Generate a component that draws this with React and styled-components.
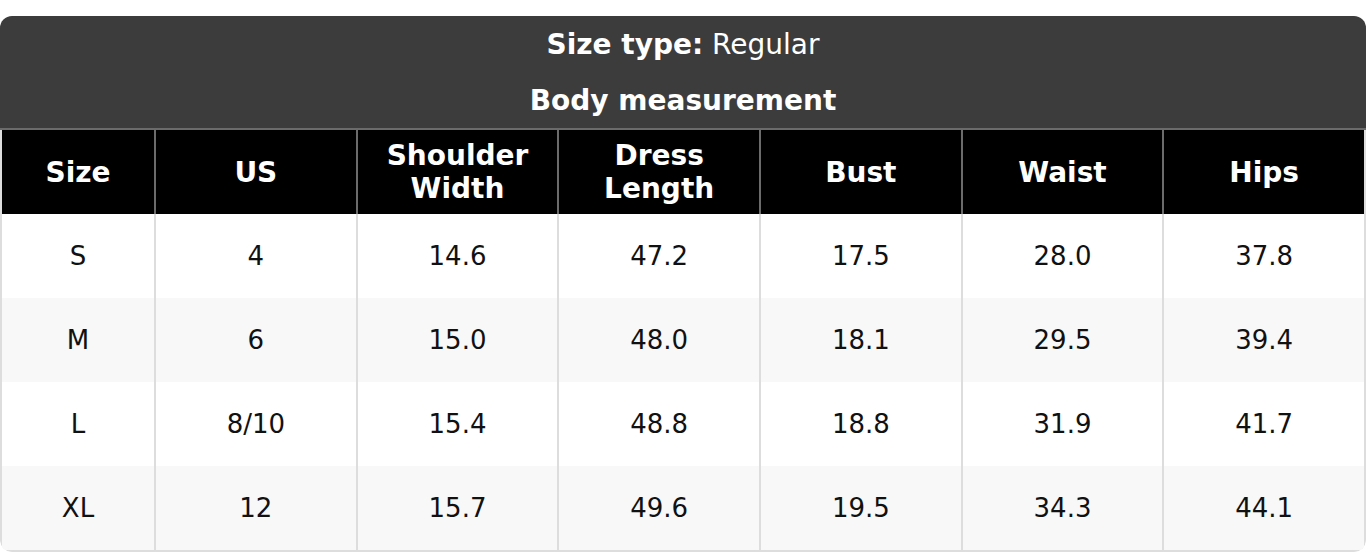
import React from 'react'
import styled, { createGlobalStyle } from 'styled-components'

const columns = ['Size', 'US', 'Shoulder Width', 'Dress Length', 'Bust', 'Waist', 'Hips']

const rows = [
  ['S', '4', '14.6', '47.2', '17.5', '28.0', '37.8'],
  ['M', '6', '15.0', '48.0', '18.1', '29.5', '39.4'],
  ['L', '8/10', '15.4', '48.8', '18.8', '31.9', '41.7'],
  ['XL', '12', '15.7', '49.6', '19.5', '34.3', '44.1'],
]

export default function App() {
  return (
    <>
      <GlobalStyle />
      <Page>
        <Chart>
          <Caption>
            <CaptionLine>
              <span>
                <b>Size type:</b> Regular
              </span>
            </CaptionLine>
            <CaptionLine>
              <b>Body measurement</b>
            </CaptionLine>
          </Caption>
          <Grid>
            {columns.map((c, i) => (
              <HeadCell key={c} first={i === 0}>
                {c.split(' ').map((w) => (
                  <span key={w}>{w}</span>
                ))}
              </HeadCell>
            ))}
            {rows.map((r, ri) =>
              r.map((v, ci) => (
                <Cell key={ri + '-' + ci} first={ci === 0} striped={ri % 2 === 1}>
                  {v}
                </Cell>
              ))
            )}
          </Grid>
        </Chart>
      </Page>
    </>
  )
}

const GlobalStyle = createGlobalStyle`
  body {
    margin: 0;
    background: #fff;
    font-family: "DejaVu Sans", Verdana, sans-serif;
  }
`

const Page = styled.div`
  padding-top: 16px;
`

const Chart = styled.div`
  width: 1366px;
  border-radius: 12px;
  overflow: hidden;
`

const Caption = styled.div`
  background: #3c3c3c;
  color: #fff;
  border-bottom: 2px solid #6b6b6b;
`

const CaptionLine = styled.div`
  height: 56px;
  display: flex;
  align-items: center;
  justify-content: center;
  font-size: 28px;
  white-space: pre;
  b {
    font-weight: bold;
  }
`

const Grid = styled.div`
  display: grid;
  grid-template-columns: 152px repeat(6, 1fr);
  border: 2px solid #dddddd;
  border-top: none;
  border-radius: 0 0 12px 12px;
`

const HeadCell = styled.div`
  height: 84px;
  display: flex;
  flex-direction: column;
  align-items: center;
  justify-content: center;
  background: #000;
  color: #fff;
  font-size: 28px;
  font-weight: bold;
  line-height: 33px;
  text-align: center;
  border-left: ${(p) => (p.first ? 'none' : '2px solid #6b6b6b')};
`

const Cell = styled.div`
  height: 84px;
  display: flex;
  align-items: center;
  justify-content: center;
  background: ${(p) => (p.striped ? '#f8f8f8' : '#ffffff')};
  color: #111;
  font-size: 26px;
  border-left: ${(p) => (p.first ? 'none' : '2px solid #dddddd')};
`
